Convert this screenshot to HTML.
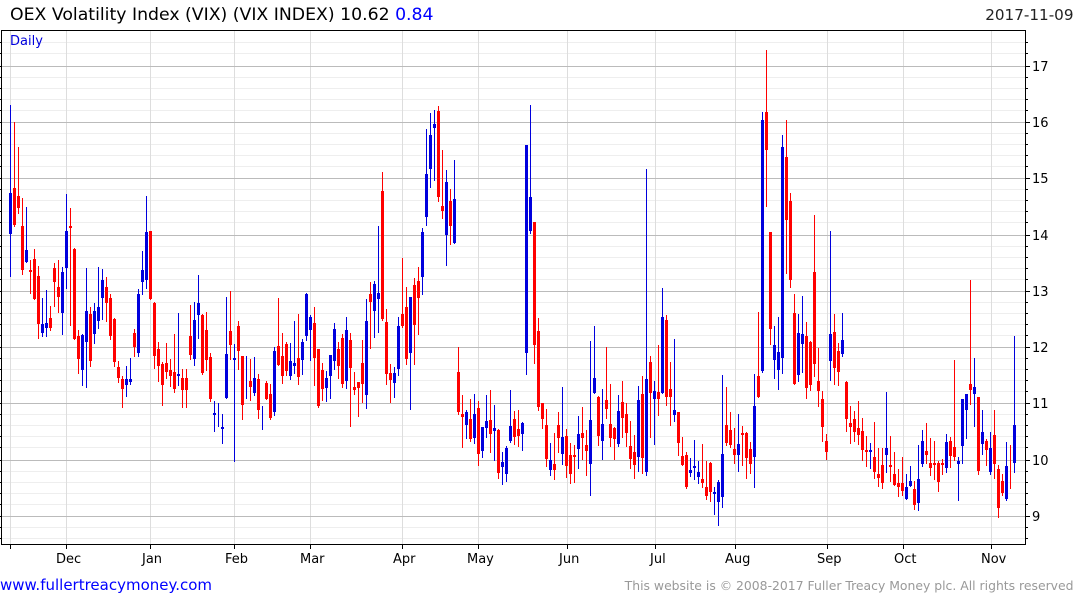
<!DOCTYPE html>
<html><head><meta charset="utf-8"><title>OEX Volatility Index</title>
<style>
html,body{margin:0;padding:0;background:#fff;width:1075px;height:600px;overflow:hidden}
svg{display:block}
text{font-family:"DejaVu Sans",sans-serif}
</style></head><body>
<svg width="1075" height="600" viewBox="0 0 1075 600" xmlns="http://www.w3.org/2000/svg">
<g shape-rendering="crispEdges" fill="none">
<path stroke="#eee" d="M2 42.5H1025M2 53.5H1025M2 77.5H1025M2 88.5H1025M2 99.5H1025M2 110.5H1025M2 133.5H1025M2 144.5H1025M2 155.5H1025M2 166.5H1025M2 189.5H1025M2 200.5H1025M2 211.5H1025M2 222.5H1025M2 246.5H1025M2 257.5H1025M2 268.5H1025M2 279.5H1025M2 302.5H1025M2 313.5H1025M2 324.5H1025M2 335.5H1025M2 358.5H1025M2 369.5H1025M2 380.5H1025M2 391.5H1025M2 414.5H1025M2 425.5H1025M2 436.5H1025M2 447.5H1025M2 471.5H1025M2 482.5H1025M2 493.5H1025M2 504.5H1025M2 527.5H1025M2 538.5H1025"/>
<path stroke="#ddd" d="M10.5 30V544M66.5 30V544M150.5 30V544M234.5 30V544M310.5 30V544M402.5 30V544M478.5 30V544M567.5 30V544M655.5 30V544M735.5 30V544M827.5 30V544M903.5 30V544M991.5 30V544"/>
<path stroke="#bbb" d="M2 66.5H1025M2 122.5H1025M2 178.5H1025M2 235.5H1025M2 291.5H1025M2 347.5H1025M2 403.5H1025M2 460.5H1025M2 516.5H1025"/>
<path stroke="#000" d="M1.5 30.5H1025.5V544.5H1.5ZM10.5 545V549M66.5 545V549M150.5 545V549M234.5 545V549M310.5 545V549M402.5 545V549M478.5 545V549M567.5 545V549M655.5 545V549M735.5 545V549M827.5 545V549M903.5 545V549M991.5 545V549"/>
<path stroke="#000" d="M0 42.5H2M0 53.5H2M0 66.5H2M0 77.5H2M0 88.5H2M0 99.5H2M0 110.5H2M0 122.5H2M0 133.5H2M0 144.5H2M0 155.5H2M0 166.5H2M0 178.5H2M0 189.5H2M0 200.5H2M0 211.5H2M0 222.5H2M0 235.5H2M0 246.5H2M0 257.5H2M0 268.5H2M0 279.5H2M0 291.5H2M0 302.5H2M0 313.5H2M0 324.5H2M0 335.5H2M0 347.5H2M0 358.5H2M0 369.5H2M0 380.5H2M0 391.5H2M0 403.5H2M0 414.5H2M0 425.5H2M0 436.5H2M0 447.5H2M0 460.5H2M0 471.5H2M0 482.5H2M0 493.5H2M0 504.5H2M0 516.5H2M0 527.5H2M0 538.5H2"/>
<path stroke="#000" d="M1026 42.5H1028M1026 53.5H1028M1026 66.5H1030M1026 77.5H1028M1026 88.5H1028M1026 99.5H1028M1026 110.5H1028M1026 122.5H1030M1026 133.5H1028M1026 144.5H1028M1026 155.5H1028M1026 166.5H1028M1026 178.5H1030M1026 189.5H1028M1026 200.5H1028M1026 211.5H1028M1026 222.5H1028M1026 235.5H1030M1026 246.5H1028M1026 257.5H1028M1026 268.5H1028M1026 279.5H1028M1026 291.5H1030M1026 302.5H1028M1026 313.5H1028M1026 324.5H1028M1026 335.5H1028M1026 347.5H1030M1026 358.5H1028M1026 369.5H1028M1026 380.5H1028M1026 391.5H1028M1026 403.5H1030M1026 414.5H1028M1026 425.5H1028M1026 436.5H1028M1026 447.5H1028M1026 460.5H1030M1026 471.5H1028M1026 482.5H1028M1026 493.5H1028M1026 504.5H1028M1026 516.5H1030M1026 527.5H1028M1026 538.5H1028"/>

<!-- red wicks -->
<path stroke="#f00" d="M14.5 122V227M18.5 147V214M22.5 198V275M30.5 260V294M34.5 249V300M38.5 266V339M50.5 306V331M54.5 263V307M58.5 260V313M70.5 208V326M74.5 248V340M78.5 330V374M90.5 307V367M106.5 277V322M110.5 294V340M114.5 318V367M118.5 361V383M122.5 376V408M134.5 329V357M150.5 232V300M154.5 302V369M158.5 342V382M162.5 362V406M166.5 343V379M170.5 359V387M174.5 334V393M182.5 369V408M186.5 369V408M190.5 305V360M202.5 314V375M206.5 312V371M210.5 353V402M230.5 291V360M238.5 321V370M242.5 356V420M250.5 359V401M258.5 374V419M266.5 381V400M270.5 384V420M278.5 298V366M282.5 333V384M286.5 342V376M298.5 314V385M314.5 307V386M318.5 349V408M322.5 363V401M338.5 342V379M342.5 334V388M350.5 333V427M354.5 372V395M358.5 382V417M362.5 340V403M370.5 282V349M382.5 172V321M386.5 309V385M390.5 364V403M402.5 258V328M406.5 287V365M414.5 278V365M418.5 267V335M438.5 106V202M442.5 150V219M450.5 189V245M458.5 347V415M462.5 395V448M470.5 399V442M478.5 401V466M490.5 390V453M498.5 429V479M514.5 411V445M518.5 410V447M534.5 222V364M538.5 318V411M542.5 403V429M546.5 409V467M554.5 433V480M558.5 412V453M566.5 429V478M570.5 443V484M574.5 445V483M582.5 407V460M586.5 430V476M598.5 396V446M606.5 347V419M610.5 384V447M614.5 427V460M622.5 381V438M626.5 403V447M630.5 421V469M634.5 435V479M642.5 376V474M650.5 356V438M658.5 345V416M666.5 315V406M670.5 362V426M678.5 412V456M682.5 437V466M686.5 452V489M702.5 444V488M706.5 461V500M710.5 462V502M726.5 387V446M730.5 412V448M734.5 428V464M742.5 426V466M746.5 432V479M750.5 442V474M758.5 312V398M766.5 50V207M770.5 232V345M786.5 120V274M790.5 193V288M794.5 294V385M806.5 322V399M810.5 341V391M814.5 215V377M818.5 348V407M822.5 391V442M826.5 434V460M834.5 314V385M838.5 343V386M846.5 381V432M850.5 406V444M854.5 411V442M858.5 401V445M862.5 418V461M866.5 436V467M874.5 422V479M878.5 448V487M882.5 448V489M890.5 436V482M894.5 452V486M898.5 469V497M902.5 457V496M914.5 481V510M926.5 423V464M930.5 438V476M934.5 441V480M938.5 461V492M942.5 459V475M950.5 437V468M954.5 360V461M970.5 280V405M978.5 397V475M986.5 439V466M994.5 410V479M998.5 465V518M1002.5 474V496M1010.5 445V489"/>
<!-- blue wicks -->
<path stroke="#00d" d="M10.5 105V277M26.5 207V263M42.5 298V337M46.5 290V337M62.5 267V335M66.5 194V289M82.5 334V386M86.5 268V388M94.5 303V344M98.5 267V329M102.5 269V320M126.5 366V397M130.5 358V385M138.5 289V357M142.5 251V295M146.5 196V289M178.5 313V386M194.5 302V366M198.5 275V339M214.5 401V432M218.5 403V427M222.5 414V444M226.5 297V399M234.5 344V462M246.5 356V399M254.5 357V396M262.5 406V430M274.5 347V416M290.5 343V380M294.5 321V374M302.5 339V375M306.5 293V341M310.5 315V361M326.5 371V402M330.5 355V399M334.5 323V370M346.5 317V389M366.5 299V409M374.5 281V338M378.5 226V333M394.5 367V398M398.5 317V376M410.5 297V410M422.5 228V295M426.5 129V226M430.5 113V188M434.5 110V181M446.5 170V266M454.5 160V244M466.5 410V439M474.5 394V444M482.5 427V458M486.5 395V438M494.5 405V461M502.5 452V485M506.5 446V482M510.5 390V443M522.5 422V451M526.5 145V375M530.5 105V234M550.5 443V476M562.5 387V465M578.5 416V469M590.5 341V496M594.5 326V394M602.5 389V460M618.5 395V447M638.5 386V472M646.5 169V476M654.5 381V445M662.5 288V394M674.5 339V422M690.5 458V477M694.5 440V480M698.5 461V484M714.5 487V515M718.5 480V526M722.5 375V508M738.5 414V472M754.5 374V488M762.5 112V373M774.5 326V379M778.5 317V390M782.5 135V374M798.5 314V382M802.5 296V373M830.5 231V381M842.5 313V357M870.5 443V469M886.5 392V473M906.5 474V500M910.5 466V487M918.5 445V511M922.5 430V467M946.5 434V473M958.5 457V501M962.5 399V464M966.5 394V439M974.5 358V427M982.5 410V455M990.5 432V475M1006.5 442V501M1014.5 336V473"/>
<!-- red bodies -->
<path stroke="#f00" stroke-width="3" d="M14.5 188V225M18.5 196V208M22.5 226V270M30.5 270V272M34.5 259V299M38.5 276V324M50.5 318V328M54.5 268V282M58.5 287V297M70.5 226V228M74.5 249V339M78.5 336V359M90.5 314V361M106.5 287V303M110.5 298V336M114.5 319V362M118.5 367V378M122.5 379V389M134.5 333V347M150.5 231V299M154.5 303V356M158.5 349V366M162.5 364V385M166.5 363V372M170.5 370V376M174.5 372V389M182.5 378V390M186.5 378V390M190.5 336V355M202.5 315V373M206.5 330V360M210.5 357V399M230.5 331V345M238.5 326V351M242.5 356V405M250.5 381V387M258.5 379V410M266.5 383V399M270.5 394V418M278.5 346V365M282.5 356V376M286.5 344V371M298.5 358V377M314.5 323V358M318.5 349V406M322.5 370V389M338.5 349V366M342.5 338V384M350.5 340V368M354.5 387V390M358.5 382V388M362.5 363V384M370.5 294V302M382.5 191V319M386.5 322V374M390.5 373V380M402.5 314V326M406.5 307V359M414.5 285V325M418.5 281V298M438.5 111V197M442.5 206V211M450.5 201V226M458.5 372V412M462.5 414V417M470.5 419V439M478.5 408V454M490.5 420V434M498.5 430V473M514.5 419V437M518.5 429V436M534.5 222V345M538.5 331V407M542.5 403V419M546.5 425V459M554.5 464V470M558.5 425V438M566.5 436V466M570.5 455V474M574.5 455V457M582.5 433V438M586.5 445V451M598.5 397V436M606.5 400V409M610.5 424V438M614.5 428V439M622.5 402V418M626.5 414V433M630.5 446V459M634.5 452V465M642.5 394V458M650.5 362V393M658.5 392V399M666.5 320V397M670.5 389V397M678.5 412V443M682.5 456V465M686.5 455V487M702.5 479V483M706.5 487V496M710.5 463V492M726.5 425V443M730.5 430V445M734.5 449V455M742.5 433V435M746.5 433V458M750.5 449V464M758.5 376V397M766.5 112V150M770.5 232V329M786.5 157V220M790.5 201V280M794.5 313V384M806.5 336V388M810.5 342V385M814.5 272V364M818.5 381V391M822.5 399V427M826.5 441V452M834.5 332V368M838.5 351V372M846.5 382V419M850.5 423V427M854.5 419V432M858.5 428V435M862.5 431V450M866.5 450V452M874.5 457V472M878.5 474V478M882.5 465V483M890.5 465V467M894.5 474V485M898.5 483V487M902.5 483V491M914.5 489V505M926.5 451V455M930.5 463V468M934.5 463V465M938.5 463V482M942.5 463V465M950.5 441V456M954.5 447V457M970.5 384V390M978.5 397V471M986.5 441V450M994.5 435V464M998.5 469V508M1002.5 481V493"/>
<!-- blue bodies -->
<path stroke="#00d" stroke-width="3" d="M10.5 193V234M26.5 250V262M42.5 324V333M46.5 323V328M62.5 272V313M66.5 231V268M82.5 335V370M86.5 311V342M94.5 311V334M98.5 307V321M102.5 280V298M126.5 379V385M130.5 379V382M138.5 294V353M142.5 270V282M146.5 232V280M178.5 374V376M194.5 320V359M198.5 303V315M214.5 413V415M222.5 427V429M226.5 354V398M234.5 358V360M254.5 378V393M274.5 351V412M290.5 361V376M294.5 363V366M302.5 342V360M306.5 294V336M310.5 317V330M326.5 378V388M330.5 355V376M334.5 329V361M346.5 330V381M366.5 321V395M374.5 284V311M378.5 293V299M394.5 373V383M398.5 326V369M410.5 297V353M422.5 232V277M426.5 174V217M430.5 135V169M434.5 124V128M446.5 182V235M454.5 199V243M466.5 412V425M474.5 414V438M482.5 427V451M486.5 421V428M494.5 428V431M502.5 462V467M506.5 448V474M510.5 426V441M522.5 423V434M526.5 145V353M530.5 197V231M550.5 460V470M562.5 437V454M578.5 434V449M590.5 420V464M594.5 378V393M602.5 424V441M618.5 411V444M638.5 400V457M646.5 379V472M654.5 391V399M662.5 317V393M674.5 410V415M690.5 470V473M694.5 466V468M698.5 472V477M714.5 492V494M718.5 482V502M722.5 454V497M738.5 444V455M754.5 406V457M762.5 120V371M774.5 345V360M778.5 352V370M782.5 147V358M798.5 333V375M802.5 334V344M830.5 334V361M842.5 340V354M870.5 450V452M886.5 448V455M906.5 487V499M910.5 481V486M918.5 479V503M922.5 441V464M946.5 442V468M958.5 461V464M962.5 399V446M966.5 394V410M974.5 387V394M982.5 432V444M990.5 448V472M1006.5 466V499M1014.5 425V463"/>
</g>

<text x="10" y="20" font-size="17.3" fill="#000">OEX Volatility Index (VIX) (VIX INDEX) 10.62 <tspan fill="#00f">0.84</tspan></text>
<text x="1073.5" y="20" font-size="15.2" fill="#222" text-anchor="end">2017-11-09</text>
<text x="10" y="45" font-size="13" fill="#00d">Daily</text>

<g font-size="13" fill="#000">
<text x="1032" y="71">17</text><text x="1032" y="127">16</text><text x="1032" y="183">15</text><text x="1032" y="240">14</text><text x="1032" y="296">13</text><text x="1032" y="352">12</text><text x="1032" y="408">11</text><text x="1032" y="465">10</text><text x="1032" y="521">9</text>
<text x="56" y="563">Dec</text><text x="142" y="563">Jan</text><text x="225" y="563">Feb</text><text x="300" y="563">Mar</text><text x="393" y="563">Apr</text><text x="467" y="563">May</text><text x="559" y="563">Jun</text><text x="650" y="563">Jul</text><text x="725" y="563">Aug</text><text x="817" y="563">Sep</text><text x="894" y="563">Oct</text><text x="981" y="563">Nov</text>
</g>
<text x="0" y="590" font-size="15" fill="#00f">www.fullertreacymoney.com</text>
<text x="1073.5" y="590" font-size="12.4" fill="#999" text-anchor="end">This website is © 2008-2017 Fuller Treacy Money plc. All rights reserved</text>
</svg>
</body></html>
